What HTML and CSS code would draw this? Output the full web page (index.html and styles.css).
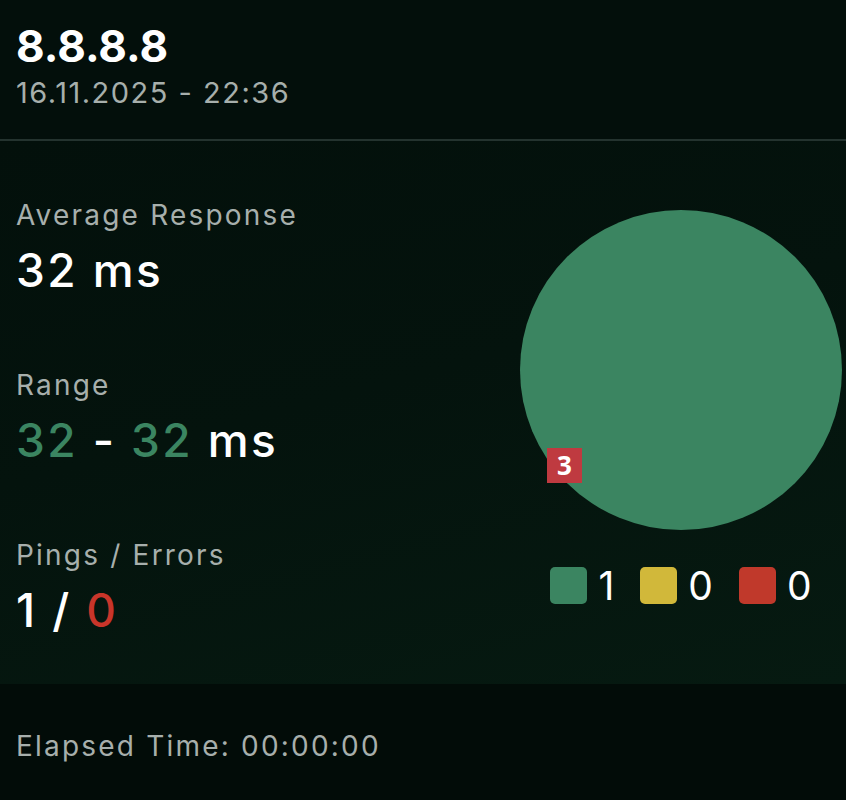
FILE: index.html
```html
<!DOCTYPE html>
<html lang="en">
<head>
<meta charset="utf-8">
<title>8.8.8.8</title>
<link rel="stylesheet" href="styles.css">
</head>
<body>
<div class="card">
  <header class="head">
    <div class="host">8.8.8.8</div>
    <div class="stamp">16.11.2025 - 22:36</div>
  </header>
  <main class="body">
    <div class="stats">
      <div class="stat">
        <div class="label">Average Response</div>
        <div class="value">32 ms</div>
      </div>
      <div class="stat">
        <div class="label">Range</div>
        <div class="value"><span class="good">32</span> - <span class="good">32</span> ms</div>
      </div>
      <div class="stat">
        <div class="label">Pings / Errors</div>
        <div class="value">1 / <span class="bad">0</span></div>
      </div>
    </div>
    <div class="chart">
      <div class="pie">
        <span class="marker">3</span>
      </div>
      <div class="legend">
        <span class="sw sw-green"></span><span class="num">1</span>
        <span class="sw sw-yellow"></span><span class="num">0</span>
        <span class="sw sw-red"></span><span class="num">0</span>
      </div>
    </div>
  </main>
  <footer class="foot">Elapsed Time: 00:00:00</footer>
</div>
</body>
</html>
```
FILE: styles.css
```css
* { box-sizing: border-box; }
html, body { margin: 0; padding: 0; background: #030e0a; }
body { font-family: Inter, "Noto Sans", sans-serif; color: #ffffff; }
.card { width: 846px; height: 800px; display: flex; flex-direction: column; }

.head {
  height: 141px;
  padding: 24px 16px 0;
  background: #030f0b;
  border-bottom: 2px solid #24332f;
}
.host { font-size: 44px; line-height: 44px; font-weight: 700; }
.stamp { margin-top: 10px; font-size: 29px; line-height: 29px; letter-spacing: 1.5px; color: #a7afac; }

.body {
  height: 543px;
  display: flex;
  justify-content: space-between;
  padding: 60px 4px 0 16px;
  background: linear-gradient(165deg, #03100b 0%, #04130d 45%, #061a11 100%);
}
.stats { display: flex; flex-direction: column; gap: 78px; }
.label { font-size: 28px; line-height: 28px; letter-spacing: 2.2px; color: #a7afac; }
.value { margin-top: 18px; font-size: 46px; line-height: 46px; font-weight: 500; letter-spacing: 2.4px; }
.good { color: #3b8561; }
.bad { color: #c9352a; }

.chart { width: 322px; padding-top: 9px; display: flex; flex-direction: column; align-items: center; }
.pie {
  position: relative;
  width: 322px; height: 320px;
  border-radius: 50%;
  background: #3b8561;
}
.marker {
  position: absolute;
  left: 27px; top: 238px;
  width: 35px; height: 35px;
  background: #bf3a40;
  color: #fff;
  font-family: "Open Sans", "Noto Sans", sans-serif;
  font-weight: 700;
  font-size: 26px;
  line-height: 35px;
  text-align: center;
}
.legend { margin-top: 36px; display: flex; align-items: center; }
.sw { width: 37px; height: 37px; border-radius: 5px; margin-right: 11px; }
.sw-green { background: #3b8561; }
.sw-yellow { background: #d1b83a; }
.sw-red { background: #c0392b; }
.num { font-size: 39px; line-height: 39px; margin-right: 26px; }
.num:last-child { margin-right: 0; }

.foot {
  flex: 1;
  padding: 48px 16px 0;
  background: #020c08;
  font-size: 28px; line-height: 28px;
  letter-spacing: 2.2px;
  color: #a7afac;
}
```
